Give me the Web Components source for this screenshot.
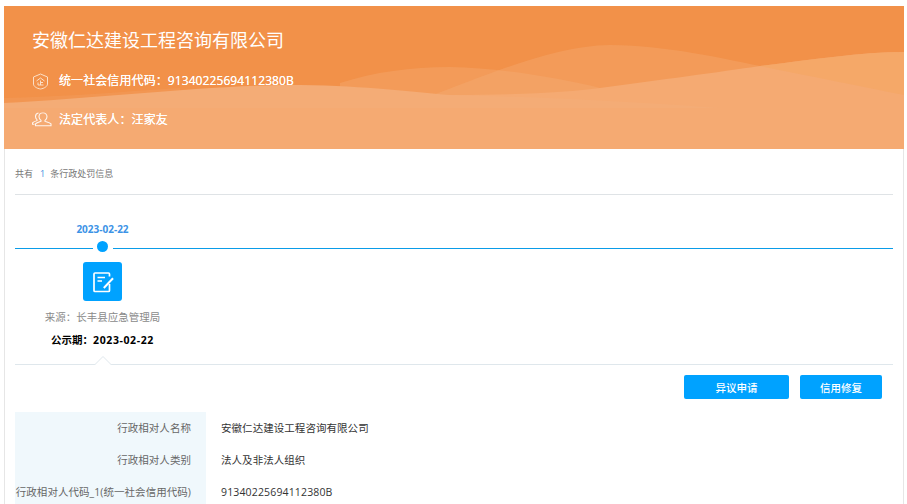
<!DOCTYPE html>
<html lang="zh-CN"><head><meta charset="utf-8"><title>行政处罚信息</title>
<style>
html,body{margin:0;padding:0;height:504px;overflow:hidden;background:#fff;font-family:"Open Sans","Noto Sans CJK SC",sans-serif;}
</style></head><body>
<credit-page>
  <company-banner name="安徽仁达建设工程咨询有限公司">
    <info-line icon="shield">统一社会信用代码：91340225694112380B</info-line>
    <info-line icon="people">法定代表人：汪家友</info-line>
  </company-banner>
  <content-card>
    <summary-line count="1"></summary-line>
    <penalty-timeline date="2023-02-22" source="来源：长丰县应急管理局" period-label="公示期：" period="2023-02-22"></penalty-timeline>
    <action-bar>
      <action-button style="width:105px">异议申请</action-button>
      <action-button style="width:82px">信用修复</action-button>
    </action-bar>
    <detail-table>
      <detail-row label="行政相对人名称">安徽仁达建设工程咨询有限公司</detail-row>
      <detail-row label="行政相对人类别">法人及非法人组织</detail-row>
      <detail-row label="行政相对人代码_1(统一社会信用代码)"><span style="letter-spacing:.15px">91340225694112380B</span></detail-row>
    </detail-table>
  </content-card>
</credit-page>
<script>
function def(name, html){
  customElements.define(name, class extends HTMLElement{
    connectedCallback(){
      if(this.shadowRoot) return;
      const r=this.attachShadow({mode:'open'});
      r.innerHTML=typeof html==='function'?html(this):html;
    }
  });
}
def('credit-page',`<style>:host{display:block;width:900px;margin:0;padding:6px 0 0 4px}</style><slot></slot>`);
def('company-banner',el=>`<style>
:host{display:block;position:relative;height:143px;background:#f29149;overflow:hidden;color:#fff}
svg.w{position:absolute;left:0;top:0;width:900px;height:143px}
.c{position:relative;display:flex;flex-direction:column;padding:21px 0 0 28px}
h1{margin:0 0 19px;font-size:18px;font-weight:400;line-height:27px;height:27px}
::slotted(info-line){margin-bottom:23px}
</style>
<svg class="w" viewBox="4 6 900 143" preserveAspectRatio="none" aria-hidden="true">
<path d="M4 98C60 97 120 92 180 88L180 110H4Z" fill="#f6b27e" fill-opacity=".18"/>
<path d="M340 83C375 72 410 67 450 67C500 68 560 78 600 88L720 110H340Z" fill="#f6b27e" fill-opacity=".3"/>
<path d="M430 96C480 78 550 46 610 45C670 46 720 58 760 66C810 76 860 86 904 95V149H430Z" fill="#f6b27e" fill-opacity=".3"/>
<path d="M4 108H330C380 106 420 98 450 95C520 95 570 92 600 88C660 80 720 72 760 66C810 60 860 52 904 52V149H4Z" fill="#f5aa72"/>
<path d="M760 66C810 60 860 52 904 52V95C860 86 810 76 760 66Z" fill="#f5a764" fill-opacity=".7"/>
<path d="M4 103C100 98 220 84 300 85C370 86 410 92 450 95C550 97 650 103 720 108H4Z" fill="#f4ac76"/>
</svg>
<div class="c"><h1>${el.getAttribute('name')}</h1><slot></slot></div>`);
const ICONS={
shield:`<svg width="17" height="17" viewBox="0 0 17 17" fill="none" stroke="#fbe0c8" stroke-width="1"><path d="M8.500 1L15.500 4V11C15.500 13.500 12 15.500 8.500 16C5 15.500 1.500 13.500 1.500 11V4Z"/><path d="M4.500 8L8.500 5L12.500 8M8.500 7.500V12M8.500 9.500H11M6 9.500V12H11.500"/></svg>`,
people:`<svg width="20" height="15" viewBox="0 0 20 17" preserveAspectRatio="none" style="margin-top:-2px" fill="none" stroke="#fff" stroke-opacity=".88" stroke-width="1.100"><g transform="matrix(-1 0 0 1 20 0)"><path d="M9 1C11.500 1 13 3 13 5.500C13 7.500 12 8.800 11 9.600V10.600C13 11.400 15.500 12.300 16.500 13.500V15.500H1V13.500C2 12.300 5 11.400 7 10.600V9.600C6 8.800 5 7.500 5 5.500C5 3 6.500 1 9 1Z"/><path d="M13.500 1.200C15.500 1.500 16.500 3.200 16.500 5.200C16.500 6.800 15.800 8 15 8.800V9.800C16.500 10.400 18.500 11.200 19.500 12.300V14H17.500"/></g></svg>`};
def('info-line',el=>`<style>
:host{display:flex;align-items:center;height:16px;font-size:12px;line-height:16px;color:#fff;letter-spacing:.09px;text-shadow:0 0 .4px #fff}
.i{width:27px;display:flex;align-items:center;flex:none}
</style><span class="i">${ICONS[el.getAttribute('icon')]}</span><slot></slot>`);
def('content-card',`<style>:host{display:block;box-sizing:border-box;height:360px;padding:0 10px;border:solid #e6e6e6;border-width:0 1px;}</style><slot></slot>`);
def('summary-line',el=>`<style>
:host{display:flex;align-items:center;height:42px;padding-top:3px;border-bottom:1px solid #dfe3e6;font-size:9px;color:#777}
b{font-weight:400;color:#3f8fe0;margin:0 5px 0 7px}
</style>共有<b>${el.getAttribute('count')}</b>条行政处罚信息`);
def('penalty-timeline',el=>`<style>
:host{display:block;position:relative;height:169px;border-bottom:1px solid #dfe7ec;}
.col{width:175px;display:flex;flex-direction:column;align-items:center}
.date{margin-top:27px;height:15px;line-height:15px;font-size:10px;font-weight:700;color:#3c93e6}
.line{position:absolute;left:0;right:0;top:53px;height:1px;background:#0a9ce8}
.dot{position:relative;margin-top:3px;width:20px;height:12px;background:#fff;display:flex;justify-content:center;align-items:center;z-index:1}
.dot i{display:block;width:11px;height:11px;border-radius:50%;background:#00a2ff}
.ic{margin-top:10px;width:39px;height:39px;border-radius:3px;background:#00a2ff;display:flex;align-items:center;justify-content:center}
.src{margin-top:9px;font-size:10.500px;line-height:14px;color:#8a8a8a;white-space:nowrap}
.per{margin-top:9px;font-size:10.500px;line-height:14px;color:#000;font-weight:700;white-space:nowrap}
.per span{letter-spacing:.6px}
.arrow{position:absolute;left:79px;bottom:-1px;width:18px;height:9px;overflow:hidden}
.arrow svg{display:block}
</style>
<div class="line"></div>
<div class="col">
<div class="date">${el.getAttribute('date')}</div>
<div class="dot"><i></i></div>
<div class="ic"><svg width="24" height="24" viewBox="0 0 24 24" fill="none" stroke="#fff" stroke-width="1.700"><path d="M18.500 6.500V4A1 1 0 0 0 17.500 3H4A1 1 0 0 0 3 4V20.500A1 1 0 0 0 4 21.500H17.500A1 1 0 0 0 18.500 20.500V14"/><path d="M6.500 7.500H14M6.500 11H11"/><path d="M12.800 18L22 8.200" stroke-width="2"/></svg></div>
<div class="src">${el.getAttribute('source')}</div>
<div class="per">${el.getAttribute('period-label')}<span>${el.getAttribute('period')}</span></div>
</div>
<div class="arrow"><svg width="18" height="10" viewBox="0 0 18 10"><path d="M0 9.500L9 .5L18 9.500" fill="#fff" stroke="#dfe7ec"/></svg></div>`);
def('action-bar',`<style>:host{display:flex;justify-content:flex-end;gap:11px;padding:10px 11px 13px 0}</style><slot></slot>`);
def('action-button',`<style>:host{display:flex;align-items:center;justify-content:center;height:24px;border-radius:2px;background:#00a2ff;color:#fff;font-size:10.500px;font-weight:500}</style><slot></slot>`);
def('detail-table',`<style>:host{display:block;font-size:10.500px;letter-spacing:.05px}</style><slot></slot>`);
def('detail-row',el=>`<style>
:host{display:grid;grid-template-columns:191px 1fr;height:32px;line-height:32px;white-space:nowrap}
.l{background:#f0f8fc;color:#666;text-align:right;padding-right:15px;box-sizing:border-box}
.v{padding-left:15px;color:#333}
</style><div class="l">${el.getAttribute('label')}</div><div class="v"><slot></slot></div>`);
</script>
</body></html>
